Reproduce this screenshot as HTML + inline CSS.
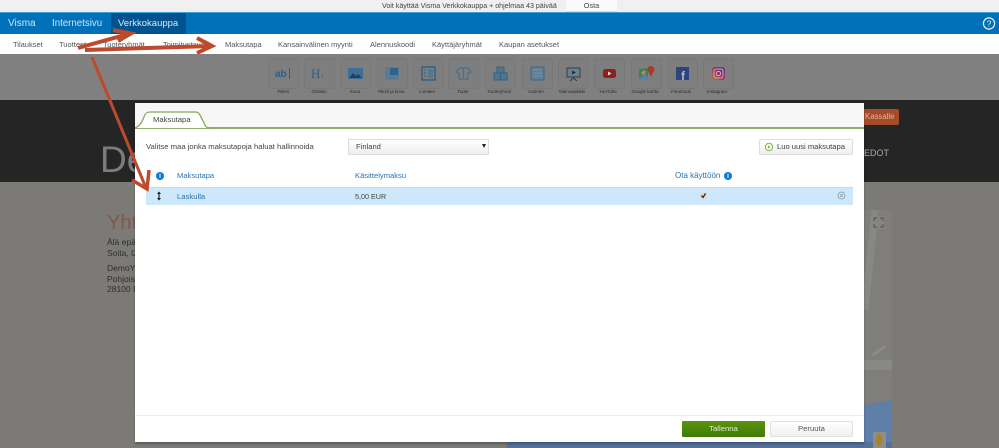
<!DOCTYPE html>
<html><head><meta charset="utf-8"><style>
html,body{margin:0;padding:0;width:999px;height:448px;overflow:hidden;background:#7b7a76}
body{font-family:"Liberation Sans",sans-serif;position:relative}
.a{position:absolute;white-space:nowrap}
.n{top:39px;font-size:7.5px;line-height:11px;color:#555}
.t{position:absolute;top:58px;width:29px;height:29px;background:#7e7e7e;border:1px solid #787878;border-radius:3px}
.t svg{position:absolute;left:5px;top:5px}
.l{position:absolute;top:89px;width:50px;text-align:center;font-size:4.5px;line-height:6px;color:#2c2c2c}
.b{color:#2b73ad;font-size:7.6px;line-height:11px}
</style></head><body>
<div class="a" style="left:0;top:0;width:999px;height:12px;background:#f0f0f0"></div>
<div class="a" style="left:382px;top:1px;font-size:7.1px;line-height:10px;color:#444">Voit käyttää Visma Verkkokauppa + ohjelmaa 43 päivää</div>
<div class="a" style="left:566px;top:0;width:51px;height:11px;background:#fafafa;border-bottom:1px solid #ddd;text-align:center;font-size:7.3px;line-height:11px;color:#444">Osta</div>
<div class="a" style="left:0;top:12px;width:999px;height:22px;background:#0070b8;border-top:1px solid #3ba0dc;box-sizing:border-box"></div>
<div class="a" style="left:111px;top:13px;width:75px;height:21px;background:#00538f"></div>
<div class="a" style="left:8px;top:17px;font-size:10px;line-height:13px;color:#cfe6f5">Visma</div>
<div class="a" style="left:52px;top:17px;font-size:9.7px;line-height:13px;color:#cfe6f5">Internetsivu</div>
<div class="a" style="left:118px;top:17px;font-size:9.5px;line-height:13px;color:#d8ebf7">Verkkokauppa</div>
<svg class="a" style="left:981px;top:15px" width="16" height="17"><circle cx="8" cy="8.5" r="5.6" fill="none" stroke="#e4f1fa" stroke-width="1.2"/><text x="8" y="11.5" font-size="8.5" font-family="Liberation Sans" fill="#e4f1fa" text-anchor="middle">?</text></svg>
<div class="a" style="left:0;top:34px;width:999px;height:20px;background:#fff"></div>
<div class="a n" style="left:13px">Tilaukset</div>
<div class="a n" style="left:59px">Tuotteet</div>
<div class="a n" style="left:103px">Tuoteryhmät</div>
<div class="a n" style="left:163px">Toimitustavat</div>
<div class="a n" style="left:225px">Maksutapa</div>
<div class="a n" style="left:278px">Kansainvälinen myynti</div>
<div class="a n" style="left:370px">Alennuskoodi</div>
<div class="a n" style="left:432px">Käyttäjäryhmät</div>
<div class="a n" style="left:499px">Kaupan asetukset</div>

<div class="a" style="left:0;top:54px;width:999px;height:46px;background:#808080"></div>
<div class="t" style="left:268px"><svg width="19" height="19"><text x="1" y="13" font-size="10" font-family="Liberation Sans" font-weight="bold" fill="#2f5f85">ab</text><path d="M15.5 4V15" stroke="#2f5f85"/></svg></div>
<div class="t" style="left:304px"><svg width="19" height="19"><text x="1" y="14" font-size="13" font-family="Liberation Serif" fill="#2f5f85">H</text><text x="11" y="14" font-size="6" font-family="Liberation Serif" fill="#2f5f85">1</text></svg></div>
<div class="t" style="left:340px"><svg width="19" height="19"><rect x="2" y="4" width="15" height="11" fill="#3f6f96"/><path d="M3 14l4-5 3 3 2-2 4 4z" fill="#1f3f5f"/></svg></div>
<div class="t" style="left:377px"><svg width="19" height="19"><rect x="2" y="3" width="14" height="13" fill="#5c7a92"/><rect x="7" y="4" width="8" height="7" fill="#2f628c"/></svg></div>
<div class="t" style="left:413px"><svg width="19" height="19"><rect x="3" y="3" width="13" height="13" fill="none" stroke="#2f5f85" stroke-width="1.4"/><rect x="9" y="5" width="5" height="9" fill="#4f7996"/><path d="M5 6h2M5 9h2M5 12h2" stroke="#2f5f85"/></svg></div>
<div class="t" style="left:448px"><svg width="19" height="19"><path d="M2 8l3-4h9l3 4-3 1v6H5V9z M9.5 4v11" fill="none" stroke="#4b6e89" stroke-width="1.2"/></svg></div>
<div class="t" style="left:485px"><svg width="19" height="19"><path d="M6 3h7v6H6zM3 9h6.5v7H3zM9.5 9H16v7H9.5z" fill="#4f7590" stroke="#3a5e78"/></svg></div>
<div class="t" style="left:522px"><svg width="19" height="19"><rect x="3" y="3" width="13" height="13" fill="#5c7e98" stroke="#44677f"/><path d="M5 6h9M5 9h9M5 12h9" stroke="#7c92a2"/></svg></div>
<div class="t" style="left:558px"><svg width="19" height="19"><rect x="3" y="4" width="13" height="9" fill="#6d7f8b" stroke="#2e3f4c"/><path d="M8 6.5l4 2-4 2z" fill="#24313b"/><path d="M9.5 13v2M6 17l3.5-3 3.5 3" stroke="#2e3f4c" fill="none"/></svg></div>
<div class="t" style="left:594px"><svg width="19" height="19"><rect x="3" y="5" width="13" height="9" rx="2.5" fill="#8e1f1f"/><path d="M8 7.5l3.5 2-3.5 2z" fill="#ddd"/></svg></div>
<div class="t" style="left:631px"><svg width="19" height="19"><path d="M2 5l9-1v11H2z" fill="#3f7f5a"/><path d="M2 15l6-6 4 6z" fill="#5a7fa8"/><path d="M4 9l3-3 2 2-3 3z" fill="#a99a3f"/><circle cx="14" cy="5.5" r="3.5" fill="#a8392d"/><path d="M11.5 7.5L14 13l2.5-5.5z" fill="#a8392d"/></svg></div>
<div class="t" style="left:667px"><svg width="19" height="19"><rect x="3" y="3" width="13" height="13" fill="#2a4580"/><text x="8" y="16" font-size="12" font-weight="bold" font-family="Liberation Sans" fill="#b8b8b8">f</text></svg></div>
<div class="t" style="left:703px"><svg width="19" height="19"><defs><linearGradient id="g" x1="0" y1="1" x2="1" y2="0"><stop offset="0" stop-color="#a8802f"/><stop offset=".5" stop-color="#a02f5f"/><stop offset="1" stop-color="#5a35a0"/></linearGradient></defs><rect x="3" y="3" width="13" height="13" rx="3" fill="url(#g)"/><rect x="5" y="5" width="9" height="9" rx="2" fill="none" stroke="#ccc" stroke-width=".8"/><circle cx="9.5" cy="9.5" r="2.2" fill="none" stroke="#ccc" stroke-width=".8"/></svg></div>
<div class="l" style="left:258px">Teksti</div><div class="l" style="left:294px">Otsikko</div><div class="l" style="left:330px">Kuva</div><div class="l" style="left:366px">Teksti ja kuva</div><div class="l" style="left:402px">Lomake</div><div class="l" style="left:438px">Tuote</div><div class="l" style="left:474px">Tuoteryhmä</div><div class="l" style="left:511px">Uutinen</div><div class="l" style="left:547px">Mainospaikki</div><div class="l" style="left:583px">YouTube</div><div class="l" style="left:620px">Google kartta</div><div class="l" style="left:656px">Facebook</div><div class="l" style="left:692px">Instagram</div>

<div class="a" style="left:0;top:100px;width:999px;height:82px;background:#252525"></div>
<div class="a" style="left:100px;top:139px;font-size:37px;line-height:42px;color:#7c7c7c">De</div>
<div class="a" style="left:860px;top:109px;width:39px;height:16px;background:#a64a28;border-radius:2px;color:#d8b8a8;font-size:7.8px;line-height:16px;text-indent:5px">Kassalle</div>
<div class="a" style="left:856px;top:147px;font-size:9px;line-height:12px;color:#a8a8a8">TIEDOT</div>

<div class="a" style="left:107px;top:212px;font-size:20px;line-height:23px;color:#84564c">Yht</div>
<div class="a" style="left:107px;top:237px;font-size:8.5px;line-height:10.5px;color:#2e2e2e">Älä epä<br>Soita, l2</div>
<div class="a" style="left:107px;top:263px;font-size:8.5px;line-height:10.5px;color:#2e2e2e">DemoY<br>Pohjois<br>28100 I</div>

<div class="a" style="left:507px;top:210px;width:385px;height:238px;background:#7f7e7b"></div>
<svg class="a" style="left:507px;top:210px" width="385" height="238">
<path d="M368 0L358 100" stroke="#878785" stroke-width="7" fill="none"/>
<path d="M357 150H385V160H357z" fill="#888886"/>
<path d="M366 145l12-9" stroke="#8b8b89" stroke-width="3"/>
<path d="M357 195L385 190V238H357z" fill="#5f7ea8"/>
<rect x="0" y="232" width="385" height="6" fill="#55719a"/>
<rect x="366" y="6" width="11" height="13" fill="#858583"/>
<path d="M367 11V8h3M373 8h3v3M376 14v3h-3M370 17h-3v-3" fill="none" stroke="#444" stroke-width=".8"/>
<rect x="366" y="222" width="13" height="16" fill="#8f8d85"/>
<ellipse cx="372" cy="231" rx="3" ry="5" fill="#a8822a"/>
<circle cx="372" cy="226" r="2" fill="#a8822a"/>
</svg>

<div class="a" style="left:135px;top:103px;width:729px;height:339px;background:#fff;box-shadow:0 2px 2px rgba(0,0,0,.25)"></div>
<div class="a" style="left:135px;top:103px;width:729px;height:25px;background:#f7f7f7"></div>
<div class="a" style="left:135px;top:127px;width:729px;height:2px;background:#93ad6f"></div>
<svg class="a" style="left:135px;top:110px" width="75" height="20"><path d="M0 18C5 16 7 12 9 7C10 3 12 2 15 2H60C63 2 64 3 66 7L70 15C71 17 72 18 75 18Z" fill="#fff"/><path d="M0 18C5 16 7 12 9 7C10 3 12 2 15 2H60C63 2 64 3 66 7L70 15C71 17 72 18 75 18" fill="none" stroke="#85a858" stroke-width="1.3"/></svg>
<div class="a" style="left:153px;top:114px;font-size:7.7px;line-height:11px;color:#444">Maksutapa</div>
<div class="a" style="left:146px;top:141px;font-size:7.7px;line-height:11px;color:#444">Valitse maa jonka maksutapoja haluat hallinnoida</div>
<div class="a" style="left:348px;top:139px;width:141px;height:16px;box-sizing:border-box;border:1px solid #ddd;background:linear-gradient(#fff,#eee);font-size:7.6px;line-height:14px;color:#444;text-indent:7px">Finland</div>
<div class="a" style="left:482px;top:144px;width:0;height:0;border-left:2px solid transparent;border-right:2px solid transparent;border-top:4px solid #222"></div>
<div class="a" style="left:759px;top:139px;width:94px;height:16px;box-sizing:border-box;border:1px solid #ddd;border-radius:2px;background:linear-gradient(#fff,#efefef);font-size:7.6px;line-height:14px;color:#444;text-indent:17px">Luo uusi maksutapa</div>
<svg class="a" style="left:764px;top:142px" width="10" height="10"><circle cx="5" cy="5" r="3.7" fill="#f4f8ec" stroke="#8db35a"/><path d="M4 3.2l2.5 1.8-2.5 1.8z" fill="#8db35a"/></svg>

<svg class="a" style="left:155px;top:171px" width="10" height="10"><circle cx="5" cy="5" r="4" fill="#0c78cf"/><rect x="4.5" y="2.5" width="1" height="4.5" fill="#dff"/></svg>
<div class="a b" style="left:177px;top:170px">Maksutapa</div>
<div class="a b" style="left:355px;top:170px">Käsittelymaksu</div>
<div class="a b" style="left:675px;top:170px;font-size:8px">Ota käyttöön</div>
<svg class="a" style="left:723px;top:171px" width="10" height="10"><circle cx="5" cy="5" r="4" fill="#0c78cf"/><rect x="4.5" y="2.5" width="1" height="4.5" fill="#dff"/></svg>
<div class="a" style="left:146px;top:187px;width:707px;height:18px;background:#cde8fb;border-top:1px solid #c4dcee;box-sizing:border-box"></div>
<svg class="a" style="left:156px;top:191px" width="6" height="10"><path d="M3 1V9" stroke="#222" stroke-width="1.2"/><path d="M1 3l2-2.5L5 3zM1 7l2 2.5L5 7z" fill="#222"/></svg>
<div class="a" style="left:177px;top:191px;font-size:7.7px;line-height:11px;color:#2b73ad">Laskulla</div>
<div class="a" style="left:355px;top:191px;font-size:7.2px;line-height:11px;color:#444">5,00 EUR</div>
<svg class="a" style="left:700px;top:192px" width="7" height="7"><rect width="7" height="7" rx="1" fill="#dcdcdc"/><path d="M1.5 3.5l1.5 2L5.5 1.5" stroke="#222" stroke-width="1.2" fill="none"/></svg>
<svg class="a" style="left:837px;top:191px" width="9" height="9"><circle cx="4.5" cy="4.5" r="3.5" fill="none" stroke="#8a9aa5" stroke-width=".8"/><path d="M3 3l3 3M6 3l-3 3" stroke="#8a9aa5" stroke-width=".8"/></svg>

<div class="a" style="left:135px;top:415px;width:729px;height:1px;background:#eee"></div>
<div class="a" style="left:682px;top:421px;width:83px;height:16px;background:linear-gradient(#5a9410,#427a06);border-radius:1px;text-align:center;color:#dfeccd;font-size:7.7px;line-height:16px">Tallenna</div>
<div class="a" style="left:770px;top:421px;width:83px;height:16px;box-sizing:border-box;background:linear-gradient(#fff,#f0f0f0);border:1px solid #e0e0e0;border-radius:2px;text-align:center;color:#555;font-size:7.7px;line-height:14px">Peruuta</div>

<svg class="a" style="left:0;top:0" width="999" height="448">
<g fill="none" stroke="#bd4a2c" stroke-width="4" stroke-linejoin="miter">
<path d="M78 48L130 33.5"/><path d="M113 30L131 33.5L118 41"/>
<path d="M85 50L211 46"/><path d="M197 38L212 46L197 53"/>
<path d="M92 57L146 188" stroke-width="3"/><path d="M132 180L147 189L149 170" stroke-width="3.5"/>
</g></svg>
</body></html>
